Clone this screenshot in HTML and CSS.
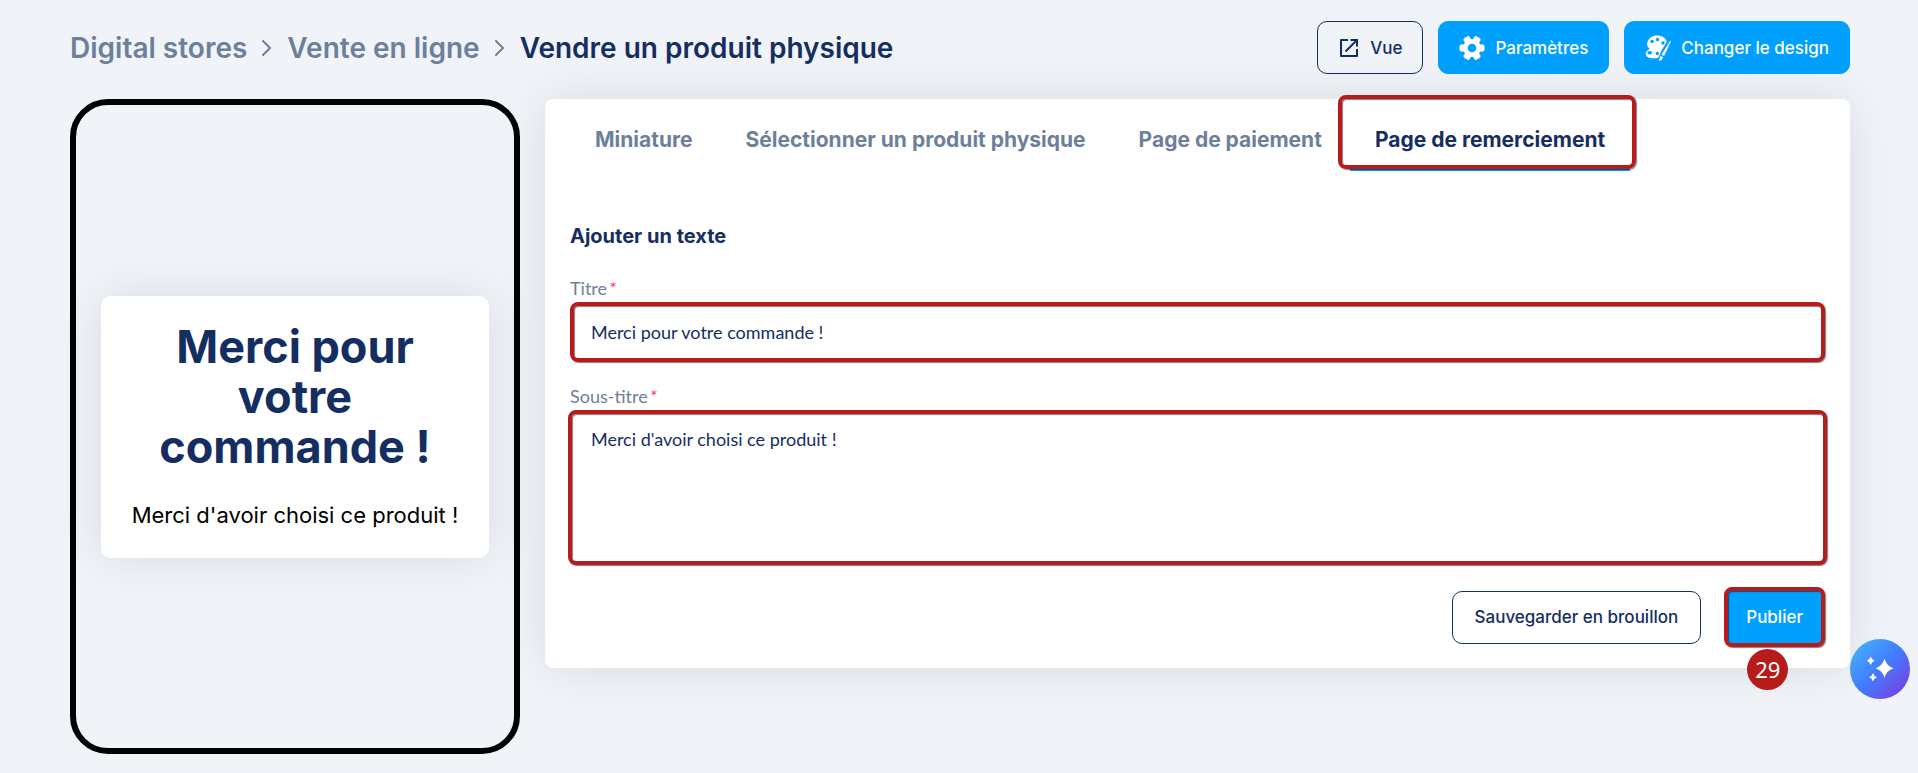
FILE: index.html
```html
<!DOCTYPE html>
<html lang="fr">
<head>
<meta charset="utf-8">
<title>Vendre un produit physique</title>
<link rel="stylesheet" href="styles.css">
</head>
<body>
<header class="topbar">
  <nav class="crumbs" aria-label="Fil d'Ariane">
    <a href="#">Digital stores</a>
    <svg class="chevron" viewBox="0 0 12 18" aria-hidden="true"><path d="M2 2l7 7-7 7"/></svg>
    <a href="#">Vente en ligne</a>
    <svg class="chevron" viewBox="0 0 12 18" aria-hidden="true"><path d="M2 2l7 7-7 7"/></svg>
    <span class="current">Vendre un produit physique</span>
  </nav>
  <div class="actions">
    <button class="btn outline" type="button">
      <svg class="icon" viewBox="0 0 22 22" aria-hidden="true"><path fill="none" stroke="currentColor" stroke-width="2" stroke-linejoin="round" d="M10 3H3v16h16v-7"/><path fill="none" stroke="currentColor" stroke-width="2" d="M12.500 3H19v6.500M19 3L7.500 14.500"/></svg>
      Vue
    </button>
    <button class="btn primary" type="button">
      <svg class="icon large" viewBox="0 0 26 26" aria-hidden="true"><g fill="currentColor"><path fill-rule="evenodd" d="M13 4a9 9 0 1 0 0 18 9 9 0 0 0 0-18zm0 4.700a4.300 4.300 0 1 1 0 8.600 4.300 4.300 0 0 1 0-8.600z"/><rect x="0.500" y="9.500" width="6" height="7" rx="2"/><rect x="0.500" y="9.500" width="6" height="7" rx="2" transform="rotate(60 13 13)"/><rect x="0.500" y="9.500" width="6" height="7" rx="2" transform="rotate(120 13 13)"/><rect x="0.500" y="9.500" width="6" height="7" rx="2" transform="rotate(180 13 13)"/><rect x="0.500" y="9.500" width="6" height="7" rx="2" transform="rotate(240 13 13)"/><rect x="0.500" y="9.500" width="6" height="7" rx="2" transform="rotate(300 13 13)"/></g></svg>
      Paramètres
    </button>
    <button class="btn primary" type="button">
      <svg class="icon large" viewBox="0 0 26 26" aria-hidden="true"><path fill="currentColor" d="M12 .500c5 0 9 2.500 9.700 6.500L17 14.500l-3.500 8c-2 .900-5 1-8 .600C2.500 22.800.500 21 .700 18.500c.200-2.300 2-2.800 3.300-3.900.900-1-.400-1.700-1.400-3C.800 8 4 .500 12 .500z"/><g fill="#00a0ff"><circle cx="7" cy="6.500" r="1.800"/><circle cx="12.500" cy="4.500" r="1.700"/><circle cx="18" cy="8" r="1.700"/><ellipse cx="4.700" cy="17.800" rx="2.400" ry="1.800"/><circle cx="12.300" cy="18.500" r="1.700"/></g><path fill="currentColor" stroke="#00a0ff" stroke-width=".600" d="M25.700 5.500c.500.300.500.800.200 1.500L19.200 21.500l-3-1.700L24.700 6c.300-.500.600-.700 1-.500zM15.500 20.500l2.900 1.700-1.800 3.500-3.400.300c1-1 .800-3 2.300-5.500z"/></svg>
      Changer le design
    </button>
  </div>
</header>

<main class="workspace">
  <section class="phone" aria-label="Aperçu">
    <article class="preview">
      <h1>Merci pour votre commande !</h1>
      <p>Merci d'avoir choisi ce produit !</p>
    </article>
  </section>

  <section class="panel">
    <nav class="tabs" aria-label="Étapes">
      <a class="tab" href="#">Miniature</a>
      <a class="tab" href="#">Sélectionner un produit physique</a>
      <a class="tab" href="#">Page de paiement</a>
      <a class="tab active" href="#" aria-current="page">Page de remerciement</a>
    </nav>
    <form class="form">
      <h2>Ajouter un texte</h2>
      <div class="field">
        <label for="title">Titre<i>*</i></label>
        <input class="marked" id="title" type="text" value="Merci pour votre commande !">
      </div>
      <div class="field wide">
        <label for="subtitle">Sous-titre<i>*</i></label>
        <textarea class="marked" id="subtitle">Merci d'avoir choisi ce produit !</textarea>
      </div>
      <div class="form-actions">
        <button class="btn outline" type="button">Sauvegarder en brouillon</button>
        <div class="publish">
          <button class="btn primary marked" type="submit">Publier</button>
          <span class="step">29</span>
        </div>
      </div>
    </form>
  </section>
</main>

<button class="assistant" type="button" aria-label="Assistant">
  <svg viewBox="0 0 60 60" aria-hidden="true"><path fill="#fff" d="M34.500 19.500q2 7.500 9 9.700-7 2.200-9 9.700-2-7.500-9-9.700 7-2.200 9-9.700zM20.700 17.500q1 3.300 4 4.300-3 1-4 4.300-1-3.300-4-4.300 3-1 4-4.300zM23 34q1 3.300 4 4.300-3 1-4 4.300-1-3.300-4-4.300 3-1 4-4.300z"/></svg>
</button>
</body>
</html>
```
FILE: styles.css
```css
* {
  box-sizing: border-box;
}

body {
  margin: 0;
  background: #f0f4f9;
  color: #152e62;
  font-family: Inter, "Liberation Sans", sans-serif;
}

.topbar {
  display: flex;
  justify-content: space-between;
  align-items: center;
  padding: 21px 68px 0 70px;
}

.crumbs {
  display: flex;
  align-items: center;
  gap: 14px;
  font-size: 28px;
  font-weight: 600;
}

.crumbs a,
.tab {
  color: #6e7f9a;
  text-decoration: none;
}

.chevron {
  width: 12px;
  height: 18px;
  fill: none;
  stroke: #6e7f9a;
  stroke-width: 2;
  stroke-linecap: round;
}

.actions {
  display: flex;
  gap: 15px;
}

.btn {
  display: flex;
  align-items: center;
  justify-content: center;
  gap: 10px;
  height: 53px;
  padding: 0 20px;
  border: 1px solid #00a0ff;
  border-radius: 10px;
  font: 500 17px Inter, "Liberation Sans", sans-serif;
}

.outline {
  background: transparent;
  border-color: #152e62;
  color: #152e62;
}

.primary {
  background: #00a0ff;
  color: #fff;
}

.icon {
  width: 22px;
  height: 22px;
}

.icon.large {
  width: 26px;
  height: 26px;
}

.workspace {
  display: grid;
  grid-template-columns: 450px 1fr;
  align-items: start;
  gap: 25px;
  padding: 25px 68px 19px 70px;
}

.phone {
  display: flex;
  flex-direction: column;
  justify-content: center;
  min-height: 655px;
  padding: 0 25px;
  border: 6px solid #000;
  border-radius: 38px;
}

.preview {
  padding: 26px 25px 28px;
  border-radius: 10px;
  background: #fff;
  box-shadow: 0 0 50px rgba(0, 0, 0, 0.1);
  text-align: center;
}

.preview h1 {
  margin: 0 0 28px;
  font-size: 45px;
  font-weight: 700;
  line-height: 50px;
}

.preview p {
  margin: 0;
  color: #000;
  font-size: 22px;
  line-height: 30px;
}

.panel {
  padding: 0 25px 21px;
  border-radius: 8px;
  background: #fff;
  box-shadow: 0 0 50px rgba(0, 0, 0, 0.1);
}

.tabs {
  display: flex;
  gap: 3px;
}

.tab {
  padding: 28px 25px 16px;
  border-bottom: 3px solid transparent;
  font-size: 21px;
  font-weight: 700;
  line-height: 25px;
  white-space: nowrap;
}

.tab.active {
  position: relative;
  border-color: #00a0ff;
  color: #152e62;
}

.tab.active::after {
  content: "";
  position: absolute;
  inset: -4px -6px -1px -12px;
  border: 4px solid #b71c1c;
  border-radius: 8px;
  box-shadow: 1px 1px 1px rgba(0, 0, 0, 0.5), inset 1px 1px 1px rgba(0, 0, 0, 0.5);
}

.form h2 {
  margin: 53px 0 30px;
  font-size: 20px;
  line-height: 24px;
}

.field {
  margin-bottom: 24px;
}

.field label {
  display: block;
  margin-bottom: 4px;
  color: #6e7f9a;
  font: 18px/20px Lato, sans-serif;
}

.field i {
  margin-left: 2px;
  color: #ff3366;
}

.marked {
  border: 4px solid #b71c1c;
  border-radius: 8px;
  box-shadow: 1px 1px 1px rgba(0, 0, 0, 0.5), inset 1px 1px 1px rgba(0, 0, 0, 0.5);
}

.field input,
.field textarea {
  display: block;
  width: 100%;
  background: #fff;
  color: #152e62;
  font: 18px/24px Lato, sans-serif;
}

.field input {
  height: 60px;
  padding: 0 17px;
}

.field textarea {
  height: 155px;
  padding: 13px 19px;
  resize: none;
}

.field.wide {
  margin: 0 -2px 22px;
}

.field.wide label {
  padding-left: 2px;
}

.form-actions {
  display: flex;
  align-items: center;
  justify-content: flex-end;
  gap: 23px;
}

.form-actions .outline {
  padding: 0 22px;
}

.publish {
  position: relative;
}

.publish .btn {
  height: 60px;
  padding: 0 18px;
}

.step {
  position: absolute;
  top: 62px;
  left: 23px;
  width: 41px;
  height: 41px;
  border-radius: 50%;
  background: #b71c1c;
  color: #fff;
  font: 22px/41px "Noto Sans", sans-serif;
  text-align: center;
}

.assistant {
  position: fixed;
  right: 8px;
  bottom: 74px;
  width: 60px;
  height: 60px;
  padding: 0;
  border: 0;
  border-radius: 50%;
  background: linear-gradient(135deg, #45b1f8 8%, #427bff 50%, #7b3fe0 92%);
}

.assistant svg {
  display: block;
}
```
